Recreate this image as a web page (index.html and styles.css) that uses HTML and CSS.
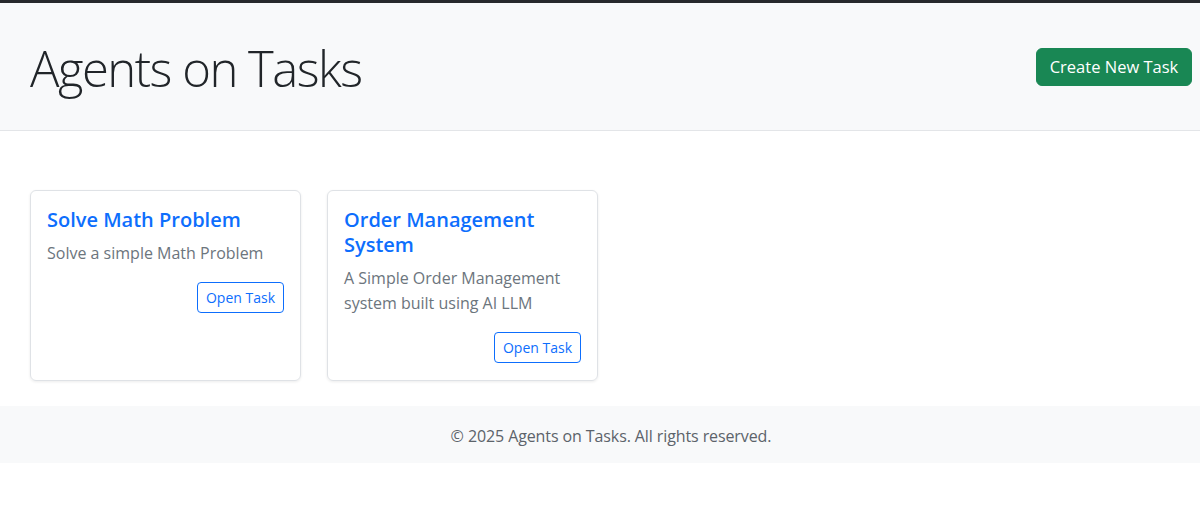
FILE: index.html
```html
<!DOCTYPE html>
<html>
  <head>
    <meta charset="utf-8">
    <meta name="viewport" content="width=device-width">
    <title>Agents on Tasks</title>
    <link rel="stylesheet" href="styles.css">
  </head>
  <body>
    <div class="page">
      <header class="top-bar">
        <h1>Agents on Tasks</h1>
        <button class="btn btn-success">Create New Task</button>
      </header>
      <main class="task-list">
        <div class="task-card">
          <h5 class="task-title">Solve Math Problem</h5>
          <p class="task-text">Solve a simple Math Problem</p>
          <div class="task-actions">
            <button class="btn btn-outline">Open Task</button>
          </div>
        </div>
        <div class="task-card">
          <h5 class="task-title">Order Management System</h5>
          <p class="task-text">A Simple Order Management system built using AI LLM</p>
          <div class="task-actions">
            <button class="btn btn-outline">Open Task</button>
          </div>
        </div>
      </main>
      <footer class="bottom-bar">
        <p>&copy; 2025 Agents on Tasks. All rights reserved.</p>
      </footer>
    </div>
  </body>
</html>
```

FILE: styles.css
```css
* {
  margin: 0;
  box-sizing: border-box;
}
html, body {
  overflow: hidden;
}
body {
  color: #212529;
  font-family: "Segoe UI", "Open Sans", sans-serif;
  font-size: 16px;
  background-color: white;
  border-top: 3px solid #27292c;
}
.page {
  width: 1222px;
}
.top-bar {
  height: 128px;
  padding: 0 30px 0 30px;
  display: flex;
  align-items: center;
  justify-content: space-between;
  background-color: #f8f9fa;
  border-bottom: 1px solid #e3e5e8;
}
h1 {
  font-size: 49px;
  font-weight: 300;
  letter-spacing: -1.5px;
  line-height: 1.2;
  margin-top: 4px;
}
.btn {
  font-family: inherit;
  cursor: pointer;
  background: none;
}
.btn-success {
  height: 38px;
  width: 156px;
  padding: 0 12px;
  font-size: 16.5px;
  line-height: 1.45;
  color: white;
  background-color: #198754;
  border: 1px solid #198754;
  border-radius: 6px;
}
.task-list {
  display: flex;
  align-items: stretch;
  gap: 26px;
  padding: 59px 30px 25px 30px;
}
.task-card {
  width: 271px;
  padding: 16px 16px 17px 16px;
  border: 1px solid #dfe2e6;
  border-radius: 6px;
  box-shadow: 0 1px 3px rgba(0, 0, 0, 0.08);
  display: flex;
  flex-direction: column;
}
.task-title {
  font-size: 20px;
  font-weight: 600;
  line-height: 25px;
  color: #0d6efd;
  margin-bottom: 9px;
}
.task-text {
  color: #6c757d;
  font-size: 16px;
  line-height: 25px;
  margin-bottom: 16px;
}
.task-actions {
  display: flex;
  justify-content: flex-end;
}
.btn-outline {
  height: 31px;
  padding: 0 8px;
  font-size: 14px;
  line-height: 21px;
  color: #0d6efd;
  border: 1px solid #0d6efd;
  border-radius: 4px;
}
.bottom-bar {
  height: 57px;
  padding-top: 2px;
  display: flex;
  align-items: center;
  justify-content: center;
  background-color: #f8f9fa;
  color: #5c636a;
  font-size: 16px;
  letter-spacing: -0.1px;
}
```
